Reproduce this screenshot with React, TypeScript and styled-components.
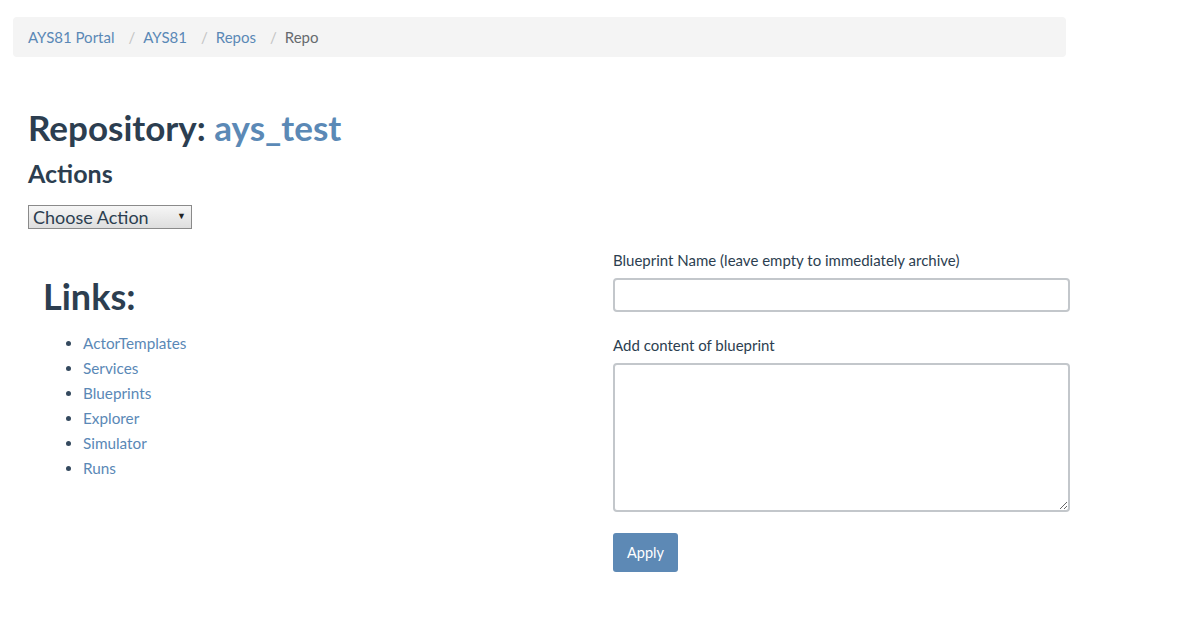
import React from "react";
import styled, { createGlobalStyle } from "styled-components";

const Global = createGlobalStyle`
  html, body { margin: 0; padding: 0; background: #fff; }
  body { font-family: Lato, "Open Sans", sans-serif; color: #2c3e50; font-size: 15px; line-height: 1.5; }
  * { box-sizing: border-box; }
`;

const Page = styled.div`
  padding: 17px 0 0 13px;
`;

const Breadcrumb = styled.ol`
  list-style: none;
  margin: 0;
  width: 1053px;
  height: 40px;
  padding: 8px 15px;
  background: #f4f4f4;
  border-radius: 4px;
  display: flex;
  align-items: center;
  font-size: 15px;
  line-height: 24px;
`;

const Crumb = styled.li<{ $active?: boolean }>`
  color: ${(p) => (p.$active ? "#666a6e" : "#5a88b6")};
  &:not(:first-child)::before {
    content: "/";
    color: #c3c3c3;
    padding: 0 8px 0 14px;
  }
`;

const Content = styled.div`
  padding-left: 15px;
`;

const Title = styled.h2`
  margin: 50px 0 0;
  font-size: 35px;
  line-height: 40px;
  font-weight: 700;
  color: #2c3e50;
`;

const Accent = styled.span`
  color: #5b89b6;
`;

const Sub = styled.h3`
  margin: 13px 0 0;
  font-size: 25px;
  line-height: 27px;
  font-weight: 700;
  color: #2c3e50;
`;

const SelectWrap = styled.div`
  position: relative;
  width: 164px;
  height: 24px;
  margin-top: 18px;
`;

const Select = styled.select`
  appearance: none;
  width: 100%;
  height: 100%;
  border: 1px solid #8a8a8a;
  border-radius: 0;
  background: linear-gradient(#f6f6f6, #dedede);
  font-family: Lato, sans-serif;
  font-size: 18px;
  color: #2c3e50;
  padding: 0 20px 0 4px;
  line-height: 22px;
`;

const Caret = styled.span`
  position: absolute;
  right: 6px;
  top: 4px;
  font-size: 9px;
  color: #222;
  pointer-events: none;
`;

const Row = styled.div`
  display: grid;
  grid-template-columns: 585px 457px;
  margin-top: 20px;
`;

const LeftCol = styled.div`
  padding-left: 15px;
`;

const LinksTitle = styled.h1`
  margin: 27px 0 0;
  font-size: 36px;
  line-height: 40px;
  font-weight: 700;
  color: #2c3e50;
`;

const LinkList = styled.ul`
  margin: 15px 0 0;
  padding-left: 40px;
  font-size: 15.3px;
  line-height: 25px;
  color: #2c3e50;
`;

const LinkItem = styled.li`
  color: #34495e;
`;

const Link = styled.a`
  color: #5a88b6;
  text-decoration: none;
`;

const RightCol = styled.div`
  display: flex;
  flex-direction: column;
`;

const Label = styled.label<{ $gap: number }>`
  font-size: 15px;
  line-height: 22px;
  margin-top: ${(p) => p.$gap}px;
  margin-bottom: 7px;
  color: #2c3e50;
`;

const Input = styled.input`
  width: 457px;
  height: 34px;
  border: 2px solid #c3c7cb;
  border-radius: 4px;
  background: #fff;
`;

const TextArea = styled.textarea`
  width: 457px;
  height: 149px;
  border: 2px solid #c3c7cb;
  border-radius: 4px;
  background: #fff;
`;

const Button = styled.button`
  margin-top: 21px;
  width: 65px;
  height: 39px;
  border: none;
  border-radius: 3px;
  background: #5d89b5;
  color: #fff;
  font-family: Lato, sans-serif;
  font-size: 14.5px;
`;

export default function App() {
  const links = ["ActorTemplates", "Services", "Blueprints", "Explorer", "Simulator", "Runs"];
  return (
    <Page>
      <Global />
      <Breadcrumb>
        <Crumb>AYS81 Portal</Crumb>
        <Crumb>AYS81</Crumb>
        <Crumb>Repos</Crumb>
        <Crumb $active>Repo</Crumb>
      </Breadcrumb>
      <Content>
        <Title>
          Repository: <Accent>ays_test</Accent>
        </Title>
        <Sub>Actions</Sub>
        <SelectWrap>
          <Select defaultValue="">
            <option value="">Choose Action</option>
          </Select>
          <Caret>▼</Caret>
        </SelectWrap>
        <Row>
          <LeftCol>
            <LinksTitle>Links:</LinksTitle>
            <LinkList>
              {links.map((l) => (
                <LinkItem key={l}>
                  <Link href="#">{l}</Link>
                </LinkItem>
              ))}
            </LinkList>
          </LeftCol>
          <RightCol>
            <Label $gap={0}>Blueprint Name (leave empty to immediately archive)</Label>
            <Input />
            <Label $gap={22}>Add content of blueprint</Label>
            <TextArea />
            <div>
              <Button>Apply</Button>
            </div>
          </RightCol>
        </Row>
      </Content>
    </Page>
  );
}
